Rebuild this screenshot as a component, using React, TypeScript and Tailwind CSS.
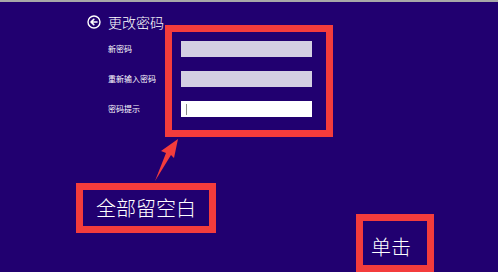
import React from "react";

const font = { fontFamily: '"Noto Sans CJK SC", "Noto Sans", sans-serif' };

function BackIcon() {
  return (
    <svg width="14" height="14" viewBox="0 0 14 14" className="shrink-0">
      <circle cx="7" cy="7" r="6" fill="none" stroke="white" strokeWidth="1.4" />
      <path d="M10 7H4.2M6.8 4.3L4 7l2.8 2.7" fill="none" stroke="white" strokeWidth="1.6" strokeLinecap="round" strokeLinejoin="round" />
    </svg>
  );
}

function Row({ label, children }: { label: string; children: React.ReactNode }) {
  return (
    <div className="flex items-center h-[16px]">
      <div className="w-[73px] text-[8px] leading-none text-white">{label}</div>
      {children}
    </div>
  );
}

export default function App() {
  return (
    <div className="relative w-[498px] h-[272px] overflow-hidden bg-[#210070]" style={font}>
      <div className="h-[2px] bg-[#a8a8a8]" />
      <div className="pl-[87px] pt-[12px]">
        <div className="flex items-center gap-[7px] h-[16px]">
          <BackIcon />
          <div className="text-[14px] leading-none text-white font-light">更改密码</div>
        </div>
        <div className="pl-[21px] mt-[11px] flex flex-col gap-[14px]">
          <Row label="新密码">
            <div className="w-[131px] h-[16px] bg-[#d3cfe2]" />
          </Row>
          <Row label="重新输入密码">
            <div className="w-[131px] h-[16px] bg-[#d3cfe2]" />
          </Row>
          <Row label="密码提示">
            <div className="w-[131px] h-[16px] bg-white flex items-center pl-[5px]">
              <div className="w-px h-[11px] bg-[#888]" />
            </div>
          </Row>
        </div>
      </div>

      {/* annotations */}
      <div className="absolute left-[165px] top-[25px] w-[168px] h-[112px] border-[7px] border-[#f43c3c]" />
      <svg className="absolute left-0 top-0" width="498" height="272">
        <polygon points="178,139 161,151 166,153 155,181 171,155 174,158" fill="#f43c3c" />
      </svg>
      <div className="absolute left-[76px] top-[183px] w-[140px] h-[50px] border-[7px] border-[#f43c3c] flex items-center justify-center">
        <span className="text-[20px] leading-none text-white font-light">全部留空白</span>
      </div>
      <div className="absolute left-[356px] top-[214px] w-[78px] h-[58px] border-[7px] border-[#f43c3c] flex items-start justify-start pl-[8px] pt-[16px]">
        <span className="text-[20px] leading-none text-white font-light">单击</span>
      </div>
    </div>
  );
}
